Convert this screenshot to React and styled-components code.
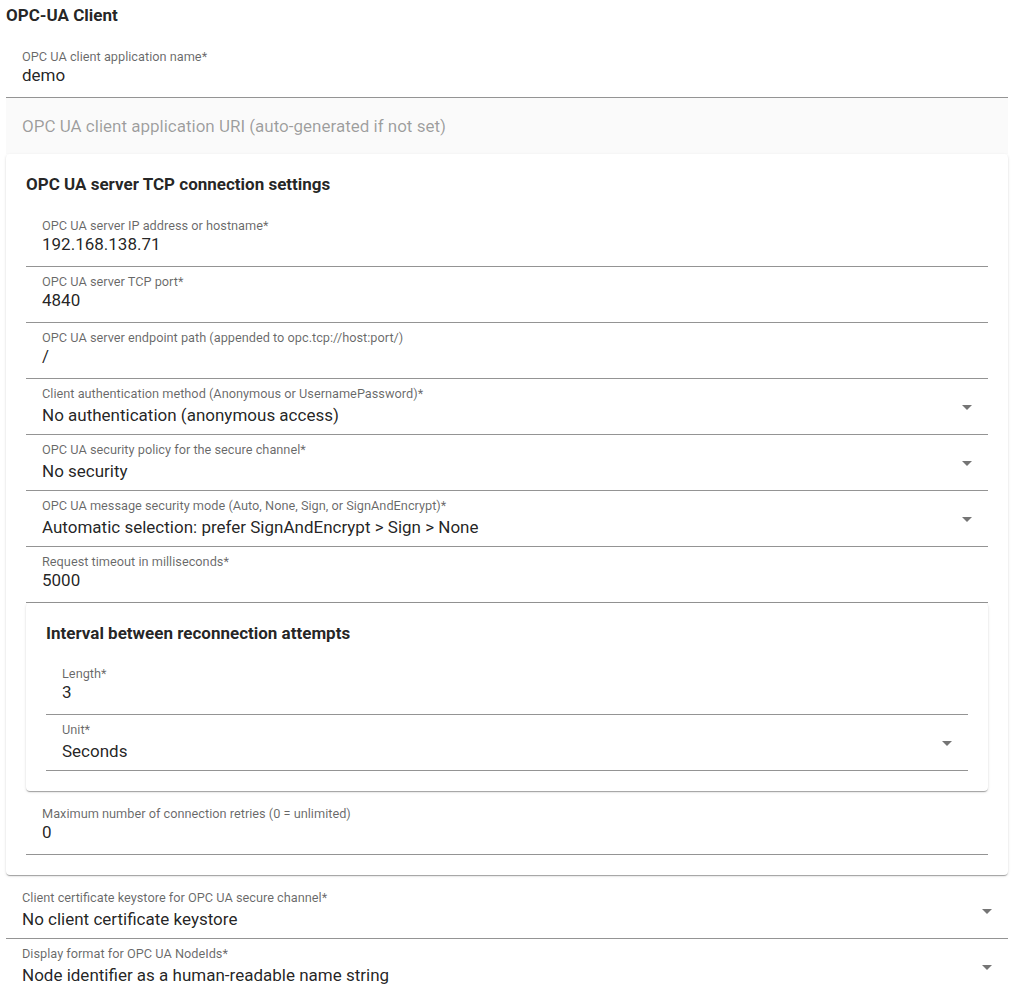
import React from "react";
import styled, { createGlobalStyle } from "styled-components";

const GlobalStyle = createGlobalStyle`
  html, body {
    margin: 0;
    overflow: hidden;
    background: #fff;
  }
  body {
    font-family: Roboto, "Liberation Sans", sans-serif;
    color: rgba(0, 0, 0, 0.87);
  }
`;

const Page = styled.div`
  padding: 5px 9px 0 6px;
`;

const Title = styled.div`
  font-size: 17px;
  line-height: 20px;
  font-weight: 700;
  margin-bottom: ${(p) => p.$gap ?? 17}px;
`;

const Card = styled.div`
  background: #fff;
  border-radius: 4px;
  padding: 20px;
  margin-bottom: 8px;
  box-shadow: 0 2px 1px -1px rgba(0, 0, 0, 0.2), 0 1px 1px 0 rgba(0, 0, 0, 0.14),
    0 1px 3px 0 rgba(0, 0, 0, 0.12);
`;

const Field = styled.div`
  box-sizing: border-box;
  height: 56px;
  display: flex;
  align-items: flex-start;
  padding: 8px ${(p) => (p.$select ? 9 : 16)}px 0 16px;
  border-bottom: 1px solid rgba(0, 0, 0, 0.42);
`;

const FieldBody = styled.div`
  flex: 1;
  min-width: 0;
`;

const Label = styled.div`
  font-size: 12.75px;
  line-height: 14px;
  color: rgba(0, 0, 0, 0.6);
`;

const Value = styled.div`
  font-size: 17px;
  line-height: 22px;
  margin-top: ${(p) => (p.$select ? 3 : 0)}px;
  color: rgba(0, 0, 0, 0.87);
  white-space: nowrap;
`;

const Arrow = styled.svg`
  width: 24px;
  height: 24px;
  margin-top: 8px;
  fill: rgba(0, 0, 0, 0.54);
  flex-shrink: 0;
`;

const EmptyField = styled.div`
  box-sizing: border-box;
  height: 56px;
  display: flex;
  align-items: center;
  padding: 0 16px;
  background: #fafafa;
  font-size: 17px;
  color: rgba(0, 0, 0, 0.38);
`;

const TextField = ({ label, value, select }) => (
  <Field $select={select}>
    <FieldBody>
      <Label>{label}</Label>
      <Value $select={select}>{value}</Value>
    </FieldBody>
    {select && (
      <Arrow viewBox="0 0 24 24">
        <path d="M7 10l5 5 5-5z" />
      </Arrow>
    )}
  </Field>
);

const App = () => (
  <Page>
    <GlobalStyle />
    <Title>OPC-UA Client</Title>
    <TextField label="OPC UA client application name*" value="demo" />
    <EmptyField>OPC UA client application URI (auto-generated if not set)</EmptyField>
    <Card>
      <Title>OPC UA server TCP connection settings</Title>
      <TextField label="OPC UA server IP address or hostname*" value="192.168.138.71" />
      <TextField label="OPC UA server TCP port*" value="4840" />
      <TextField label="OPC UA server endpoint path (appended to opc.tcp://host:port/)" value="/" />
      <TextField
        select
        label="Client authentication method (Anonymous or UsernamePassword)*"
        value="No authentication (anonymous access)"
      />
      <TextField select label="OPC UA security policy for the secure channel*" value="No security" />
      <TextField
        select
        label="OPC UA message security mode (Auto, None, Sign, or SignAndEncrypt)*"
        value="Automatic selection: prefer SignAndEncrypt > Sign > None"
      />
      <TextField label="Request timeout in milliseconds*" value="5000" />
      <Card>
        <Title $gap={16}>Interval between reconnection attempts</Title>
        <TextField label="Length*" value="3" />
        <TextField select label="Unit*" value="Seconds" />
      </Card>
      <TextField label="Maximum number of connection retries (0 = unlimited)" value="0" />
    </Card>
    <TextField
      select
      label="Client certificate keystore for OPC UA secure channel*"
      value="No client certificate keystore"
    />
    <TextField
      select
      label="Display format for OPC UA NodeIds*"
      value="Node identifier as a human-readable name string"
    />
  </Page>
);

export default App;
